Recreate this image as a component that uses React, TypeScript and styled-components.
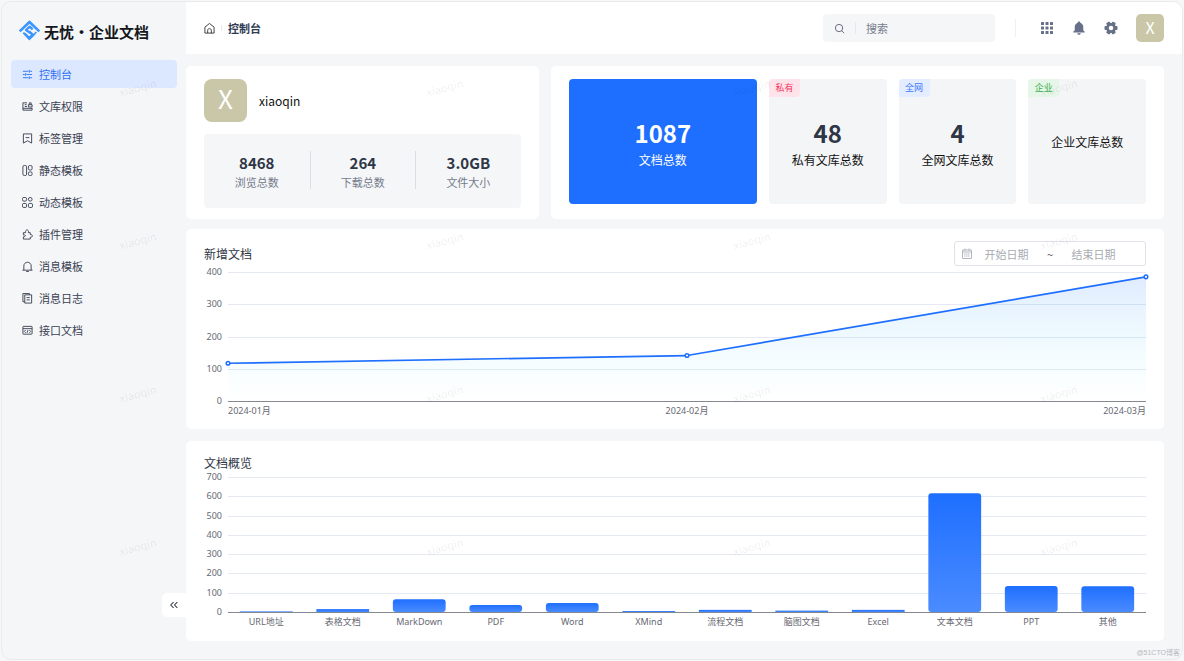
import React from 'react';
import styled, { createGlobalStyle } from 'styled-components';

const sans = "'Noto Sans CJK SC', 'Noto Sans', sans-serif";
const chartSans = "'Noto Sans', 'Noto Sans CJK SC', sans-serif";

const colors = {
  canvas: '#f4f6f8',
  primary: '#1e6fff',
  ink: '#2f3645',
  muted: '#747b8b',
  avatar: '#c9c7a7',
};

const GlobalStyle = createGlobalStyle`
  *, *::before, *::after { box-sizing: border-box; }
  body {
    margin: 0;
    padding: 1px;
    background: #f7f7f7;
    font-family: ${sans};
    font-size: 12px;
    color: #111;
  }
  button, input { font-family: inherit; }
  h1, h2, p, ul, dl, dd { margin: 0; padding: 0; }
`;

const Frame = styled.div`
  position: relative;
  display: grid;
  grid-template-columns: 184px minmax(0, 1fr);
  min-height: calc(100vh - 2px);
  border: 1px solid #e9eaeb;
  border-radius: 10px;
  overflow: hidden;
  background: ${colors.canvas};
`;

/* ---------- sidebar ---------- */

const Sidebar = styled.aside`
  display: flex;
  flex-direction: column;
`;

const Brand = styled.a`
  display: flex;
  align-items: center;
  gap: 4px;
  height: 58px;
  padding-left: 17px;
  color: #15171c;
  font-size: 15px;
  font-weight: 700;
  text-decoration: none;
  white-space: nowrap;
`;

const Menu = styled.ul`
  display: flex;
  flex-direction: column;
  gap: 4px;
  padding: 0 9px;
  list-style: none;
`;

const MenuLink = styled.a<{ $active?: boolean }>`
  display: flex;
  align-items: center;
  gap: 6px;
  height: 28px;
  padding-left: 11px;
  border-radius: 4px;
  background: ${(p) => (p.$active ? '#dce8ff' : 'transparent')};
  color: ${(p) => (p.$active ? '#2f6ff5' : '#3a4152')};
  font-size: 11px;
  text-decoration: none;
`;

const Collapse = styled.button`
  align-self: flex-end;
  display: grid;
  place-items: center;
  width: 24px;
  height: 24px;
  margin: auto 0 42px;
  padding: 0;
  border: 0;
  border-radius: 5px 0 0 5px;
  background: #fff;
  color: ${colors.ink};
`;

/* ---------- header ---------- */

const Main = styled.div`
  display: flex;
  flex-direction: column;
`;

const Header = styled.header`
  display: flex;
  align-items: center;
  height: 52px;
  padding: 0 18px;
  background: #fff;
`;

const Crumbs = styled.nav`
  display: flex;
  align-items: center;
  gap: 6px;
  color: #2f3a52;
  font-size: 11px;
  font-weight: 700;
`;

const CrumbLink = styled.a`
  display: flex;
  color: #333;
`;

const Rule = styled.span<{ $h: number }>`
  width: 1px;
  height: ${(p) => p.$h}px;
  background: #e6e8ec;
`;

const Search = styled.label`
  display: flex;
  align-items: center;
  gap: 10px;
  width: 172px;
  height: 28px;
  margin-left: auto;
  padding: 0 11px;
  border-radius: 4px;
  background: ${colors.canvas};
  color: #5c6478;
`;

const SearchInput = styled.input`
  flex: 1;
  min-width: 0;
  padding: 0;
  border: 0;
  outline: 0;
  background: transparent;
  font-size: 11px;
  &::placeholder { color: #767d8b; opacity: 1; }
`;

const HeaderRule = styled(Rule)`
  margin-left: 20px;
  background: #eef0f3;
`;

const Tools = styled.div`
  display: flex;
  align-items: center;
  gap: 18px;
  margin: 0 18px 0 24px;
`;

const ToolButton = styled.button`
  display: grid;
  place-items: center;
  width: 14px;
  height: 28px;
  padding: 0;
  border: 0;
  background: none;
  color: #667089;
`;

const Avatar = styled.span<{ $large?: boolean }>`
  display: grid;
  place-items: center;
  width: ${(p) => (p.$large ? 43 : 28)}px;
  height: ${(p) => (p.$large ? 43 : 28)}px;
  padding-bottom: ${(p) => (p.$large ? 6 : 3)}px;
  border-radius: ${(p) => (p.$large ? 8 : 5)}px;
  background: ${colors.avatar};
  color: #fff;
  font-size: ${(p) => (p.$large ? 26 : 16)}px;
  line-height: 1;
`;

const AvatarButton = styled.button`
  padding: 0;
  border: 0;
  background: none;
`;

/* ---------- content ---------- */

const Content = styled.main`
  display: flex;
  flex-direction: column;
  gap: 12px;
  padding: 12px 18px 18px 0;
`;

const Summary = styled.section`
  display: grid;
  grid-template-columns: 23fr 40fr;
  gap: 12px;
  margin-bottom: -2px;
`;

const Card = styled.section`
  min-width: 0;
  padding: 12px 18px 11px;
  border-radius: 5px;
  background: #fff;
`;

const ProfileCard = styled(Card)`
  display: flex;
  flex-direction: column;
  gap: 12px;
  padding-top: 13px;
`;

const Profile = styled.div`
  display: flex;
  align-items: center;
  gap: 12px;
  font-size: 12px;
`;

const Stats = styled.dl`
  display: grid;
  grid-template-columns: repeat(3, 1fr);
  padding: 17px 0 19px;
  border-radius: 4px;
  background: ${colors.canvas};
`;

const Stat = styled.div`
  display: flex;
  flex-direction: column-reverse;
  align-items: center;
  height: 38px;
  & + & { border-left: 1px solid #dcdee3; }
`;

const StatLabel = styled.dt`
  color: ${colors.muted};
  font-size: 11px;
  line-height: 14px;
`;

const StatValue = styled.dd`
  color: ${colors.ink};
  font-size: 15px;
  font-weight: 700;
  line-height: 24px;
`;

const TotalsCard = styled(Card)`
  display: grid;
  grid-template-columns: 8fr 5fr 5fr 5fr;
  gap: 12px;
  padding: 13px 18px 15px;
`;

const Tile = styled.div<{ $filled?: boolean }>`
  position: relative;
  display: flex;
  flex-direction: column;
  align-items: center;
  justify-content: center;
  border-radius: 4px;
  background: ${(p) => (p.$filled ? colors.primary : '#f4f5f7')};
  color: ${(p) => (p.$filled ? '#fff' : '#111')};
  line-height: 20px;
  white-space: nowrap;
`;

const TileValue = styled.strong<{ $filled?: boolean }>`
  padding-top: 2px;
  color: ${(p) => (p.$filled ? '#fff' : colors.ink)};
  font-size: 24px;
  line-height: 34px;
`;

const Tag = styled.span<{ $fg: string; $bg: string }>`
  position: absolute;
  top: 0;
  left: 0;
  width: 31px;
  border-radius: 4px 0 4px 0;
  background: ${(p) => p.$bg};
  color: ${(p) => p.$fg};
  font-size: 9px;
  line-height: 18px;
  text-align: center;
`;

const CardHead = styled.div<{ $h: number }>`
  display: flex;
  align-items: center;
  justify-content: space-between;
  height: ${(p) => p.$h}px;
`;

const CardTitle = styled.h2`
  color: ${colors.ink};
  font-size: 12px;
  font-weight: 400;
  line-height: 18px;
`;

const DateRange = styled.div`
  display: flex;
  align-items: center;
  width: 192px;
  height: 25px;
  padding: 0 17px 0 7px;
  border: 1px solid #e0e2ea;
  border-radius: 3px;
  color: #555;
  font-size: 11px;
`;

const DateInput = styled.input`
  flex: 1;
  min-width: 0;
  padding: 0;
  border: 0;
  outline: 0;
  background: transparent;
  font-size: 11px;
  text-align: center;
  &::placeholder { color: #a9abb2; opacity: 1; }
`;

const Tilde = styled.span`
  width: 18px;
  text-align: center;
`;

const Plot = styled.svg<{ $h: number }>`
  display: block;
  width: calc(100% - 24px);
  height: ${(p) => p.$h}px;
  margin-left: 24px;
  overflow: visible;
  font-family: ${chartSans};
  font-size: 9px;
`;

/* ---------- overlays ---------- */

const Watermarks = styled.div`
  position: absolute;
  top: 8px;
  left: -18px;
  display: grid;
  grid-template-columns: repeat(4, 307px);
  grid-auto-rows: 153px;
  pointer-events: none;
`;

const Mark = styled.span`
  display: grid;
  place-items: center;
  color: rgba(0, 0, 0, 0.08);
  font-size: 11px;
  transform: rotate(-15deg);
`;

const Credit = styled.small`
  position: absolute;
  right: 2px;
  bottom: 1px;
  color: #b9bbbe;
  font-family: 'Liberation Sans', 'Noto Sans CJK SC', sans-serif;
  font-size: 7px;
  line-height: 10px;
`;

/* ---------- icons ---------- */

const LineIcon = ({ size = 11, children }: { size?: number; children: React.ReactNode }) => (
  <svg width={size} height={size} viewBox="0 0 24 24" fill="none" stroke="currentColor" strokeWidth={2} strokeLinejoin="round" aria-hidden="true">
    {children}
  </svg>
);

const Logo = () => (
  <svg width="21" height="22" viewBox="0 0 63 66" fill="none" stroke="#3b97ff" strokeWidth="8" aria-hidden="true">
    <path d="M2 34 31.500 6 61 34" strokeLinejoin="round" />
    <path d="M41 28 32 20 21 30 41 44 31 54 17 41" strokeLinejoin="round" strokeWidth="7" />
    <path d="M31 33 44 45 52 36" strokeWidth="5" />
    <path d="M13 38 31 57 43 46" strokeWidth="6" />
  </svg>
);

const icons = {
  console: <path d="M2 5h12M18 5h4M16 2v6M2 12h4M10 12h12M8 9v6M2 19h12M18 19h4M16 16v6" />,
  library: (
    <>
      <path d="M11 4H2v16h20v-5M2 16h20M6 8h4M6 12h5" />
      <path d="M14 8h8v5h-8zM16 8V4h4v4" />
    </>
  ),
  tag: <path d="M3 2h18v20l-9-5-9 5zM8 10h8" />,
  layout: (
    <>
      <rect x="2" y="1" width="8" height="22" rx="3" />
      <rect x="14" y="1" width="8" height="10" rx="3" />
      <rect x="14" y="15" width="8" height="8" rx="3" />
    </>
  ),
  grid: (
    <>
      <rect x="1" y="1" width="9" height="8" rx="3" />
      <circle cx="18" cy="5" r="4" />
      <rect x="1" y="14" width="9" height="9" rx="3" />
      <rect x="14" y="14" width="9" height="9" rx="3" />
    </>
  ),
  plugin: <path d="M3 8h5c-2-8 8-8 6 0h4v4c6-1 6 7 0 6v4H3v-5c6 0 6-5 0-4z" />,
  bell: <path d="M1 20h22M4 20V11c0-11 16-11 16 0v9M9 23h6" />,
  log: (
    <>
      <path d="M6 4h15v18H6zM6 19H2V1h14v3" />
      <path d="M10 10h7M10 15h7" />
    </>
  ),
  api: (
    <>
      <rect x="2" y="3" width="20" height="17" rx="1" />
      <path d="M2 8h20M8 11l-3 3 3 3M16 11l3 3-3 3M13 11l-2 6" />
    </>
  ),
};

const AppsIcon = () => (
  <svg width="12" height="12" viewBox="0 0 12 12" fill="currentColor" aria-hidden="true">
    {[0, 4.5, 9].map((y) => [0, 4.5, 9].map((x) => <rect key={`${x}-${y}`} x={x} y={y} width="3" height="3" rx="0.5" />))}
  </svg>
);

const BellSolid = () => (
  <svg width="12" height="14" viewBox="0 0 24 28" fill="currentColor" aria-hidden="true">
    <path d="M12 1c1.500 0 2.500 1 2.500 2.500C18.500 5 20.500 8 20.500 12v6.500l3 3V23H.5v-1.500l3-3V12c0-4 2-7 6-8.500C9.500 2 10.500 1 12 1zM8.500 24.500h7c0 4-7 4-7 0z" />
  </svg>
);

const GearSolid = () => (
  <svg width="14" height="14" viewBox="0 0 28 28" aria-hidden="true">
    <g fill="currentColor">
      <circle cx="14" cy="14" r="10" />
      {[30, 90, 150, 210, 270, 330].map((a) => (
        <rect key={a} x="10" y="1" width="8" height="8" rx="2" transform={`rotate(${a} 14 14)`} />
      ))}
    </g>
    <circle cx="14" cy="14" r="4.500" fill="#fff" />
  </svg>
);

const CalendarIcon = () => (
  <svg width="10" height="11" viewBox="0 0 20 22" fill="none" stroke="#b4b6bc" strokeWidth="2" aria-hidden="true">
    <path d="M1 4h18v17H1zM1 8h18M6 1v5M14 1v5" />
    <path d="M4 12h12M4 16h12" strokeDasharray="3 1" />
  </svg>
);

/* ---------- data ---------- */

const menu: { label: string; icon: keyof typeof icons }[] = [
  { label: '控制台', icon: 'console' },
  { label: '文库权限', icon: 'library' },
  { label: '标签管理', icon: 'tag' },
  { label: '静态模板', icon: 'layout' },
  { label: '动态模板', icon: 'grid' },
  { label: '插件管理', icon: 'plugin' },
  { label: '消息模板', icon: 'bell' },
  { label: '消息日志', icon: 'log' },
  { label: '接口文档', icon: 'api' },
];

const stats = [
  { label: '浏览总数', value: '8468' },
  { label: '下载总数', value: '264' },
  { label: '文件大小', value: '3.0GB' },
];

const totals = [
  { label: '私有文库总数', value: '48', tag: '私有', fg: '#f5365c', bg: '#ffe3ea' },
  { label: '全网文库总数', value: '4', tag: '全网', fg: '#3f7bff', bg: '#e3edff' },
  { label: '企业文库总数', value: '', tag: '企业', fg: '#3fae4d', bg: '#e6f6e8' },
];

const monthly = [
  { month: '2024-01月', count: 117 },
  { month: '2024-02月', count: 141 },
  { month: '2024-03月', count: 385 },
];

const kinds = [
  { name: 'URL地址', count: 3 },
  { name: '表格文档', count: 15 },
  { name: 'MarkDown', count: 66 },
  { name: 'PDF', count: 36 },
  { name: 'Word', count: 47 },
  { name: 'XMind', count: 5 },
  { name: '流程文档', count: 11 },
  { name: '脑图文档', count: 7 },
  { name: 'Excel', count: 11 },
  { name: '文本文档', count: 616 },
  { name: 'PPT', count: 135 },
  { name: '其他', count: 134 },
];

/* ---------- charts ---------- */

function Axis({ top, height, max }: { top: number; height: number; max: number }) {
  const ticks = Array.from({ length: max / 100 + 1 }, (_, i) => i * 100);
  return (
    <g>
      {ticks.map((t) => {
        const y = Math.round(top + height * (1 - t / max));
        return (
          <g key={t}>
            <line x1="0" x2="100%" y1={y} y2={y} stroke={t ? '#e4e9f2' : '#85888f'} shapeRendering="crispEdges" />
            <text x="-6" y={y + 3} textAnchor="end" fill="#666872">{t}</text>
          </g>
        );
      })}
    </g>
  );
}

function LineChart() {
  const top = 6;
  const height = 129;
  const max = 400;
  const points = monthly.map((m, i) => ({
    ...m,
    x: (i * 100) / (monthly.length - 1),
    y: top + height * (1 - m.count / max),
  }));
  const outline = points.map((p) => `${p.x},${p.y}`).join(' ');
  const anchors = ['start', 'middle', 'end'] as const;
  return (
    <Plot $h={152} role="img" aria-label="新增文档">
      <defs>
        <linearGradient id="area" x1="0" y1="0" x2="0" y2="1">
          <stop offset="0" stopColor="#1e6fff" stopOpacity="0.14" />
          <stop offset="0.5" stopColor="#3cbcf5" stopOpacity="0.08" />
          <stop offset="1" stopColor="#3ce6ff" stopOpacity="0" />
        </linearGradient>
      </defs>
      <Axis top={top} height={height} max={max} />
      <svg width="100%" height="152" viewBox="0 0 100 152" preserveAspectRatio="none">
        <polygon points={`0,${top + height} ${outline} 100,${top + height}`} fill="url(#area)" />
      </svg>
      {points.slice(1).map((p, i) => (
        <line key={p.month} x1={`${points[i].x}%`} y1={points[i].y} x2={`${p.x}%`} y2={p.y} stroke={colors.primary} strokeWidth="1.7" />
      ))}
      {points.map((p, i) => (
        <g key={p.month}>
          <circle cx={`${p.x}%`} cy={p.y} r="1.8" fill="#fff" stroke={colors.primary} strokeWidth="1.5" />
          <text x={`${p.x}%`} y="148" textAnchor={anchors[i]} fill="#666872">{p.month}</text>
        </g>
      ))}
    </Plot>
  );
}

function BarChart() {
  const top = 5;
  const height = 135;
  const max = 700;
  const slot = 100 / kinds.length;
  const bar = slot * 0.69;
  return (
    <Plot $h={158} role="img" aria-label="文档概览">
      <defs>
        <linearGradient id="bar" x1="0" y1="0" x2="0" y2="1">
          <stop offset="0" stopColor="#1e6fff" />
          <stop offset="1" stopColor="#4a8bff" />
        </linearGradient>
      </defs>
      <Axis top={top} height={height} max={max} />
      {kinds.map((k, i) => {
        const h = (height * k.count) / max;
        const center = slot * (i + 0.5);
        return (
          <g key={k.name}>
            <rect x={`${center - bar / 2}%`} y={top + height - h} width={`${bar}%`} height={h} rx={h < 4 ? 0 : 3} fill="url(#bar)" />
            <text x={`${center}%`} y="153" textAnchor="middle" fill="#666872">{k.name}</text>
          </g>
        );
      })}
    </Plot>
  );
}

export default function App() {
  return (
    <Frame lang="zh-CN">
      <GlobalStyle />
      <Sidebar>
        <Brand href="#home">
          <Logo />
          无忧·企业文档
        </Brand>
        <nav aria-label="主菜单">
          <Menu>
            {menu.map((m, i) => (
              <li key={m.label}>
                <MenuLink href={`#${m.icon}`} $active={i === 0}>
                  <LineIcon>{icons[m.icon]}</LineIcon>
                  {m.label}
                </MenuLink>
              </li>
            ))}
          </Menu>
        </nav>
        <Collapse type="button" aria-label="收起菜单">
          <LineIcon size={10}>
            <path d="M11 5 4 12l7 7M20 5l-7 7 7 7" strokeWidth="2.5" />
          </LineIcon>
        </Collapse>
      </Sidebar>

      <Main>
        <Header>
          <Crumbs aria-label="位置">
            <CrumbLink href="#home" aria-label="首页">
              <LineIcon>
                <path d="M2 9 12 1l10 8v13H2zM8 22v-6c0-5 8-5 8 0v6" />
              </LineIcon>
            </CrumbLink>
            <Rule $h={6} />
            <span>控制台</span>
          </Crumbs>
          <Search>
            <LineIcon>
              <circle cx="11" cy="11" r="8" />
              <path d="m17 17 5 5" />
            </LineIcon>
            <Rule $h={12} />
            <SearchInput type="search" placeholder="搜索" aria-label="搜索" />
          </Search>
          <HeaderRule $h={18} />
          <Tools>
            <ToolButton type="button" aria-label="应用"><AppsIcon /></ToolButton>
            <ToolButton type="button" aria-label="通知"><BellSolid /></ToolButton>
            <ToolButton type="button" aria-label="设置"><GearSolid /></ToolButton>
          </Tools>
          <AvatarButton type="button" aria-label="账户">
            <Avatar>X</Avatar>
          </AvatarButton>
        </Header>

        <Content>
          <Summary>
            <ProfileCard>
              <Profile>
                <Avatar $large>X</Avatar>
                <span>xiaoqin</span>
              </Profile>
              <Stats>
                {stats.map((s) => (
                  <Stat key={s.label}>
                    <StatLabel>{s.label}</StatLabel>
                    <StatValue>{s.value}</StatValue>
                  </Stat>
                ))}
              </Stats>
            </ProfileCard>
            <TotalsCard>
              <Tile $filled>
                <TileValue $filled>1087</TileValue>
                <span>文档总数</span>
              </Tile>
              {totals.map((t) => (
                <Tile key={t.label}>
                  <Tag $fg={t.fg} $bg={t.bg}>{t.tag}</Tag>
                  {t.value && <TileValue>{t.value}</TileValue>}
                  <span>{t.label}</span>
                </Tile>
              ))}
            </TotalsCard>
          </Summary>

          <Card>
            <CardHead $h={25}>
              <CardTitle>新增文档</CardTitle>
              <DateRange>
                <CalendarIcon />
                <DateInput type="text" placeholder="开始日期" aria-label="开始日期" />
                <Tilde>~</Tilde>
                <DateInput type="text" placeholder="结束日期" aria-label="结束日期" />
              </DateRange>
            </CardHead>
            <LineChart />
          </Card>

          <Card>
            <CardHead $h={19}>
              <CardTitle>文档概览</CardTitle>
            </CardHead>
            <BarChart />
          </Card>
        </Content>
      </Main>

      <Watermarks aria-hidden="true">
        {Array.from({ length: 16 }, (_, i) => (
          <Mark key={i}>xiaoqin</Mark>
        ))}
      </Watermarks>
      <Credit>@51CTO博客</Credit>
    </Frame>
  );
}
